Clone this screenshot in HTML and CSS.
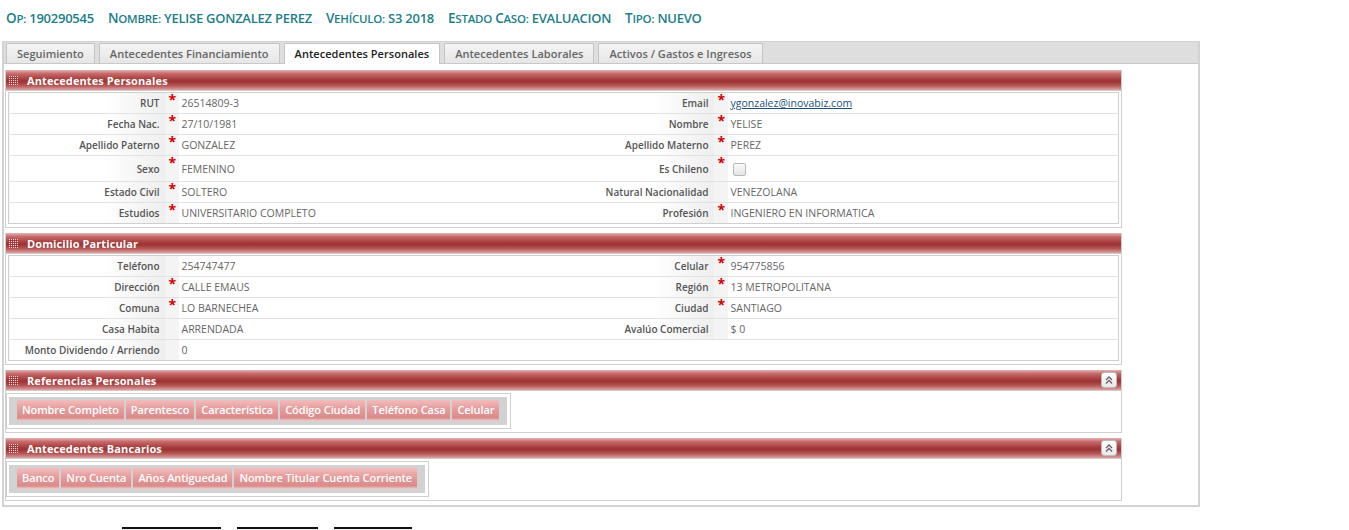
FILE: index.html
```html
<!DOCTYPE html>
<html lang="es">
<head>
<meta charset="utf-8">
<title>Antecedentes Personales</title>
<link rel="stylesheet" href="styles.css">
</head>
<body>
<div class="case-bar">
  <span class="case-item"><span class="k">Op:</span> 190290545</span>
  <span class="case-item"><span class="k">Nombre:</span> YELISE GONZALEZ PEREZ</span>
  <span class="case-item"><span class="k">Vehículo:</span> S3 2018</span>
  <span class="case-item"><span class="k">Estado</span> <span class="k">Caso:</span> EVALUACION</span>
  <span class="case-item"><span class="k">Tipo:</span> NUEVO</span>
</div>

<div class="tabs-panel">
  <ul class="tab-strip">
    <li class="tab">Seguimiento</li>
    <li class="tab">Antecedentes Financiamiento</li>
    <li class="tab active">Antecedentes Personales</li>
    <li class="tab">Antecedentes Laborales</li>
    <li class="tab">Activos / Gastos e Ingresos</li>
  </ul>
  <div class="tab-content">

    <section class="block">
      <div class="block-head"><span class="grip"></span><span class="block-title">Antecedentes Personales</span></div>
      <table class="form-grid">
        <colgroup><col class="c-label1"><col class="c-req"><col class="c-val1"><col class="c-label2"><col class="c-req"><col></colgroup>
        <tr><th>RUT</th><td class="req">*</td><td>26514809-3</td><th>Email</th><td class="req">*</td><td><a class="mail" href="#">ygonzalez@inovabiz.com</a></td></tr>
        <tr><th>Fecha Nac.</th><td class="req">*</td><td>27/10/1981</td><th>Nombre</th><td class="req">*</td><td>YELISE</td></tr>
        <tr><th>Apellido Paterno</th><td class="req">*</td><td>GONZALEZ</td><th>Apellido Materno</th><td class="req">*</td><td>PEREZ</td></tr>
        <tr class="tall"><th>Sexo</th><td class="req">*</td><td>FEMENINO</td><th>Es Chileno</th><td class="req">*</td><td><span class="checkbox"></span></td></tr>
        <tr><th>Estado Civil</th><td class="req">*</td><td>SOLTERO</td><th>Natural Nacionalidad</th><td class="req"></td><td>VENEZOLANA</td></tr>
        <tr><th>Estudios</th><td class="req">*</td><td>UNIVERSITARIO COMPLETO</td><th>Profesión</th><td class="req">*</td><td>INGENIERO EN INFORMATICA</td></tr>
      </table>
    </section>

    <section class="block">
      <div class="block-head"><span class="grip"></span><span class="block-title">Domicilio Particular</span></div>
      <table class="form-grid">
        <colgroup><col class="c-label1"><col class="c-req"><col class="c-val1"><col class="c-label2"><col class="c-req"><col></colgroup>
        <tr><th>Teléfono</th><td class="req"></td><td>254747477</td><th>Celular</th><td class="req">*</td><td>954775856</td></tr>
        <tr><th>Dirección</th><td class="req">*</td><td>CALLE EMAUS</td><th>Región</th><td class="req">*</td><td>13 METROPOLITANA</td></tr>
        <tr><th>Comuna</th><td class="req">*</td><td>LO BARNECHEA</td><th>Ciudad</th><td class="req">*</td><td>SANTIAGO</td></tr>
        <tr><th>Casa Habita</th><td class="req"></td><td>ARRENDADA</td><th>Avalúo Comercial</th><td class="req"></td><td>$ 0</td></tr>
        <tr><th>Monto Dividendo / Arriendo</th><td class="req"></td><td>0</td><th class="blank"></th><td class="blank"></td><td></td></tr>
      </table>
    </section>

    <section class="block">
      <div class="block-head"><span class="grip"></span><span class="block-title">Referencias Personales</span>
        <span class="collapse"><svg width="10" height="10" viewBox="0 0 10 10"><path d="M2 5 L5 2 L8 5 M2 8.5 L5 5.5 L8 8.5" fill="none" stroke="#666" stroke-width="1.4"/></svg></span>
      </div>
      <div class="grid-wrap">
        <div class="grid-head">
          <span class="hcell">Nombre Completo</span>
          <span class="hcell">Parentesco</span>
          <span class="hcell">Característica</span>
          <span class="hcell">Código Ciudad</span>
          <span class="hcell">Teléfono Casa</span>
          <span class="hcell">Celular</span>
        </div>
      </div>
    </section>

    <section class="block">
      <div class="block-head"><span class="grip"></span><span class="block-title">Antecedentes Bancarios</span>
        <span class="collapse"><svg width="10" height="10" viewBox="0 0 10 10"><path d="M2 5 L5 2 L8 5 M2 8.5 L5 5.5 L8 8.5" fill="none" stroke="#666" stroke-width="1.4"/></svg></span>
      </div>
      <div class="grid-wrap">
        <div class="grid-head">
          <span class="hcell">Banco</span>
          <span class="hcell">Nro Cuenta</span>
          <span class="hcell">Años Antiguedad</span>
          <span class="hcell">Nombre Titular Cuenta Corriente</span>
        </div>
      </div>
    </section>

  </div>
</div>

<div class="actions">
  <button class="btn b1" type="button"></button>
  <button class="btn b2" type="button"></button>
  <button class="btn b3" type="button"></button>
</div>
</body>
</html>
```

FILE: styles.css
```css
html, body {
  margin: 0;
  padding: 0;
  background: #fff;
}
body {
  font-family: "Open Sans", "DejaVu Sans", sans-serif;
  color: #555;
  overflow: hidden;
}

.case-bar {
  height: 41px;
  display: flex;
  align-items: baseline;
  gap: 14px;
  padding: 9px 0 0 6px;
  box-sizing: border-box;
  color: #1b7e88;
  font-weight: 600;
  font-size: 13px;
  letter-spacing: -0.25px;
}
.k {
  display: inline-block;
  text-transform: uppercase;
  font-size: 11.5px;
}
.k::first-letter {
  font-size: 13.5px;
}

.tabs-panel {
  margin-left: 2px;
  width: 1198px;
  height: 466px;
  box-sizing: border-box;
  border: 2px solid #d2d2d2;
  border-top: 1px solid #d2d2d2;
  display: flex;
  flex-direction: column;
  overflow: hidden;
}

.tab-strip {
  list-style: none;
  margin: 0;
  padding: 2px 0 0 2px;
  display: flex;
  gap: 4px;
  background: #dedede;
  border-bottom: 1px solid #c8c8c8;
  height: 22px;
  box-sizing: border-box;
  align-items: flex-end;
  flex: none;
}
.tab {
  height: 20px;
  box-sizing: border-box;
  border: 1px solid #c4c4c4;
  border-bottom: none;
  border-radius: 2px 2px 0 0;
  background: linear-gradient(#f4f4f4, #e6e6e6);
  padding: 0 10px;
  font-size: 11px;
  font-weight: 600;
  color: #666;
  line-height: 19px;
  white-space: nowrap;
  letter-spacing: 0.03px;
}
.tab.active {
  background: #fff;
  color: #222;
  height: 21px;
  margin-bottom: -1px;
}

.tab-content {
  flex: 1;
  background: #fff;
  padding: 6px 76px 0 1px;
  display: flex;
  flex-direction: column;
  gap: 5px;
}

.block {
  border: 1px solid #cfcfcf;
  border-top: none;
  padding-bottom: 3px;
}
.block-head {
  height: 20px;
  display: flex;
  align-items: center;
  gap: 9px;
  padding-left: 3px;
  background: linear-gradient(#e3b4b4 0%, #c76a6a 18%, #a53a3a 48%, #9f3434 58%, #b65656 78%, #dba2a2 100%);
  color: #fff;
  font-size: 11px;
  font-weight: 700;
  letter-spacing: 0.1px;
  border-bottom: 1px solid #d8c8c8;
}
.block-title {
  flex: 1;
}
.grip {
  width: 9px;
  height: 9px;
  background-image:
    linear-gradient(90deg, transparent 1px, rgba(160,50,50,0.9) 1px),
    linear-gradient(transparent 1px, rgba(160,50,50,0.9) 1px);
  background-size: 2px 2px;
  background-color: rgba(255,255,255,0.8);
}
.collapse {
  width: 14px;
  height: 14px;
  margin-right: 4px;
  border: 1px solid #bbb;
  border-radius: 3px;
  background: linear-gradient(#fff, #e8e8e8);
  display: flex;
  align-items: center;
  justify-content: center;
}

.form-grid {
  width: calc(100% - 4px);
  margin: 1px 2px 0;
  border-collapse: collapse;
  border: 1px solid #cfcfcf;
  table-layout: fixed;
  font-size: 10.5px;
}
.c-label1 { width: 156px; }
.c-req { width: 14px; }
.c-val1 { width: 383px; }
.c-label2 { width: 152px; }
.form-grid tr {
  height: 21px;
  border-bottom: 1px solid #e2e2e2;
}
.form-grid tr.tall {
  height: 26px;
}
.form-grid tr:last-child {
  border-bottom: none;
}
.form-grid th {
  text-align: right;
  font-weight: 600;
  font-size: 10px;
  color: #555;
  padding: 0 5px 0 0;
  background: linear-gradient(to right, #fff 60%, #eeeeee 100%);
  white-space: nowrap;
}
.form-grid td {
  padding: 0 0 0 3px;
  color: #666;
  white-space: nowrap;
}
.form-grid td.req {
  background: #f4f4f4;
  color: #d40000;
  font-size: 14px;
  font-weight: 700;
  padding: 0 0 0 4px;
  vertical-align: top;
  line-height: 14px;
}
.form-grid th.blank,
.form-grid td.blank {
  background: #fff;
}
.mail {
  color: #1d4f7a;
  text-decoration: underline;
}
.checkbox {
  display: inline-block;
  width: 11px;
  height: 11px;
  border: 1px solid #b8b8b8;
  border-radius: 2px;
  background: linear-gradient(#fafafa, #e4e4e4);
  vertical-align: middle;
  margin-left: 2px;
}

.grid-wrap {
  width: max-content;
  margin: 2px 0 0 0;
  border: 1px solid #cfcfcf;
  padding: 3px 3px 3px 2px;
  background: #fff;
}
.grid-head {
  display: flex;
  gap: 2px;
  background: #d2d2d2;
  padding: 3px 8px 4px 8px;
}
.hcell {
  height: 21px;
  line-height: 20px;
  padding: 0 5px;
  font-size: 11px;
  font-weight: 600;
  color: #fff;
  background: linear-gradient(#f2bcbc 0%, #e69e9e 40%, #da8a8a 85%, #f2d0d0 100%);
  white-space: nowrap;
  letter-spacing: -0.09px;
}

.actions {
  display: flex;
  gap: 16px;
  padding: 20px 0 0 122px;
}
.btn {
  height: 24px;
  border: none;
  border-top: 2px solid #111;
  background: #f0f0f0;
  padding: 0;
}
.b1 { width: 99px; }
.b2 { width: 81px; }
.b3 { width: 78px; }
```
